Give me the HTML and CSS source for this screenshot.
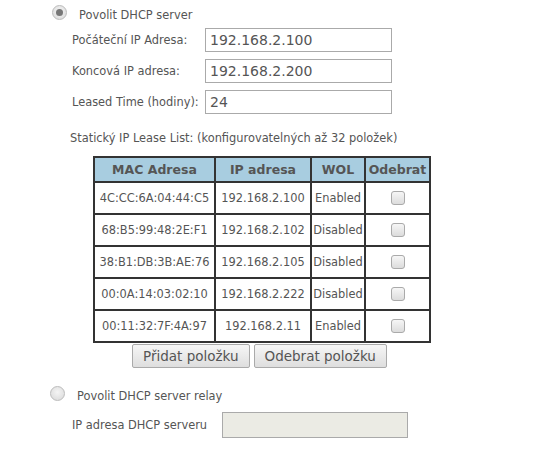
FILE: index.html
```html
<!DOCTYPE html>
<html lang="cs">
<head>
    <meta charset="UTF-8">
    <title>DHCP server</title>
    <link rel="stylesheet" href="styles.css">
</head>
<body>
    <div class="page">
        <!-- DHCP server -->
        <label class="radio-row">
            <input type="radio" name="dhcp" class="radio" checked>
            <span>Povolit DHCP server</span>
        </label>
        <div class="fields">
            <label class="field-label">Počáteční IP Adresa:</label>
            <input type="text" class="text-input" value="192.168.2.100">
            <label class="field-label">Koncová IP adresa:</label>
            <input type="text" class="text-input" value="192.168.2.200">
            <label class="field-label">Leased Time (hodiny):</label>
            <input type="text" class="text-input" value="24">
        </div>

        <p class="lease-title">Statický IP Lease List: (konfigurovatelných až 32 položek)</p>
        <table class="lease-table">
            <thead>
                <tr>
                    <th class="col-mac">MAC Adresa</th>
                    <th class="col-ip">IP adresa</th>
                    <th class="col-wol">WOL</th>
                    <th class="col-del">Odebrat</th>
                </tr>
            </thead>
            <tbody>
                <tr><td>4C:CC:6A:04:44:C5</td><td>192.168.2.100</td><td>Enabled</td><td><input type="checkbox" class="check"></td></tr>
                <tr><td>68:B5:99:48:2E:F1</td><td>192.168.2.102</td><td>Disabled</td><td><input type="checkbox" class="check"></td></tr>
                <tr><td>38:B1:DB:3B:AE:76</td><td>192.168.2.105</td><td>Disabled</td><td><input type="checkbox" class="check"></td></tr>
                <tr><td>00:0A:14:03:02:10</td><td>192.168.2.222</td><td>Disabled</td><td><input type="checkbox" class="check"></td></tr>
                <tr><td>00:11:32:7F:4A:97</td><td>192.168.2.11</td><td>Enabled</td><td><input type="checkbox" class="check"></td></tr>
            </tbody>
        </table>
        <div class="buttons">
            <button class="btn">Přidat položku</button>
            <button class="btn">Odebrat položku</button>
        </div>

        <!-- DHCP relay -->
        <label class="radio-row relay">
            <input type="radio" name="dhcp" class="radio">
            <span>Povolit DHCP server relay</span>
        </label>
        <div class="relay-field">
            <label class="field-label">IP adresa DHCP serveru</label>
            <input type="text" class="text-input disabled" disabled>
        </div>
    </div>
</body>
</html>
```

FILE: styles.css
```css
body {
    margin: 0;
    font-family: "DejaVu Sans", Verdana, sans-serif;
    font-size: 11.4px;
    color: #555;
    background: #fff;
}
.page {
    padding: 3px 0 0 52px;
}
.radio-row {
    display: flex;
    align-items: center;
    gap: 12px;
}
.radio-row span {
    padding-top: 5px;
}
.radio {
    appearance: none;
    margin: 0;
    width: 15px;
    height: 15px;
    border-radius: 50%;
    border: 1px solid #bbb;
    background: radial-gradient(circle at 50% 40%, #f4f4f4, #d8d8d8);
    position: relative;
}
.radio:checked::after {
    content: "";
    position: absolute;
    left: 3px;
    top: 3px;
    width: 7px;
    height: 7px;
    border-radius: 50%;
    background: #777;
}
.fields {
    display: grid;
    grid-template-columns: 133px 187px;
    row-gap: 7px;
    align-items: center;
    margin: 6px 0 0 20px;
}
.field-label {
    white-space: nowrap;
}
.text-input {
    box-sizing: border-box;
    width: 187px;
    height: 24px;
    margin: 0;
    padding: 0 4px;
    border: 1px solid #aaa;
    font-family: "DejaVu Sans", Verdana, sans-serif;
    font-size: 14px;
    color: #555;
}
.lease-title {
    margin: 17px 0 0 18px;
}
.lease-table {
    border-collapse: collapse;
    margin: 11px 0 0 41px;
    text-align: center;
    table-layout: fixed;
}
.lease-table th,
.lease-table td {
    border: 2px solid #333;
    padding: 0;
    white-space: nowrap;
}
.lease-table th {
    height: 23px;
    background: #a8cde0;
    font-size: 12.5px;
    font-weight: bold;
    color: #555;
}
.lease-table td {
    height: 30px;
}
.col-mac { width: 119px; }
.col-ip { width: 94px; }
.col-wol { width: 52px; }
.col-del { width: 63px; }
.check {
    appearance: none;
    margin: 0;
    width: 14px;
    height: 14px;
    border: 1px solid #aaa;
    border-radius: 3px;
    background: linear-gradient(#f6f6f6, #dcdcdc);
    vertical-align: middle;
}
.buttons {
    display: flex;
    gap: 4px;
    margin: 1px 0 0 80px;
}
.btn {
    height: 24px;
    padding: 0 10px;
    border: 1px solid #aaa;
    border-radius: 2px;
    background: linear-gradient(#f6f6f6, #dedede);
    font-family: "DejaVu Sans", Verdana, sans-serif;
    font-size: 13.5px;
    color: #555;
}
.relay {
    margin: 16px 0 0 -2px;
}
.relay-field {
    display: flex;
    align-items: center;
    margin: 9px 0 0 20px;
}
.relay-field .field-label {
    width: 150px;
}
.text-input.disabled {
    background: #ebebe4;
    width: 186px;
    height: 26px;
}
```
